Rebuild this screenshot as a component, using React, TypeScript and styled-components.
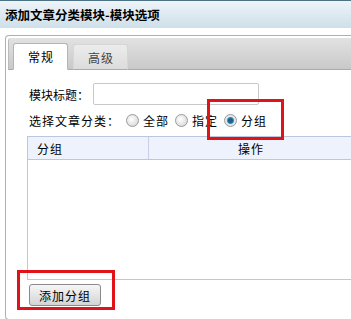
import React from "react";
import styled, { createGlobalStyle } from "styled-components";

const Global = createGlobalStyle`
  html, body { margin: 0; padding: 0; background: #fff; }
  body { font-family: "Noto Sans CJK SC", "Noto Sans", sans-serif; font-size: 12px; color: #000; overflow: hidden; }
`;

const Page = styled.div`
  position: relative;
  width: 351px;
  height: 319px;
  overflow: hidden;
`;

const TitleBar = styled.div`
  height: 27px;
  border-top: 1px solid #4d7486;
  background: linear-gradient(#eef4f8, #cde0ea);
  display: flex;
  align-items: center;
  padding-left: 5px;
  font-weight: bold;
  font-size: 12.5px;
`;

const Panel = styled.div`
  margin: 7px 0 0 5px;
  height: 283px;
  border: 1px solid #a3b3bd;
  border-right: none;
  border-radius: 4px 0 0 4px;
  display: flex;
  flex-direction: column;
  background: #fff;
`;

const TabBar = styled.div`
  height: 31px;
  margin: 2px 0 0 2px;
  border-radius: 3px 0 0 0;
  background: linear-gradient(#e2e2e2, #c9c9c9);
  border-bottom: 1px solid #aaa;
  border-left: 1px solid #bbb;
  display: flex;
  align-items: flex-end;
  gap: 5px;
  padding-left: 4px;
`;

const Tab = styled.div<{ $active?: boolean }>`
  box-sizing: border-box;
  width: 55px;
  height: ${(p) => (p.$active ? 27 : 26)}px;
  margin-bottom: -1px;
  border-radius: 3px 3px 0 0;
  display: flex;
  align-items: center;
  padding-left: 14px;
  font-size: 12px;
  letter-spacing: 1px;
  color: ${(p) => (p.$active ? "#000" : "#444")};
  background: ${(p) => (p.$active ? "#fff" : "linear-gradient(#ececec, #dcdcdc)")};
  border: 1px solid ${(p) => (p.$active ? "#b5b5b5" : "#d6d6d6")};
  border-bottom: ${(p) => (p.$active ? "1px solid #fff" : "1px solid #aaa")};
`;

const Content = styled.div`
  padding: 13px 0 0 21px;
  display: flex;
  flex-direction: column;
`;

const Row = styled.div<{ $gap?: number; $spacing?: number }>`
  display: flex;
  align-items: center;
  height: 22px;
  margin-left: 2px;
  margin-top: ${(p) => p.$gap ?? 0}px;
  letter-spacing: ${(p) => p.$spacing ?? 1}px;
`;

const Input = styled.div`
  width: 164px;
  height: 20px;
  border: 1px solid #c8c8c8;
  border-radius: 2px;
  margin-left: 4px;
`;

const Radio = styled.span<{ $on?: boolean }>`
  width: 11px;
  height: 11px;
  border-radius: 50%;
  border: 1px solid #9a9a9a;
  background: ${(p) =>
    p.$on
      ? "radial-gradient(circle, #1d5f86 0 2px, #3b8bb8 3px, #dfe8ee 4px)"
      : "radial-gradient(circle at 40% 40%, #fff, #d0d0d0)"};
  margin: 0 4px 0 6px;
  flex: none;
`;

const Table = styled.div`
  margin-top: 5px;
  height: 142px;
  border: 1px solid #bcc6de;
  border-right: none;
  display: flex;
  flex-direction: column;
`;

const THead = styled.div`
  height: 22px;
  background: #eef2fc;
  border-bottom: 1px solid #bcc6de;
  display: flex;
  align-items: stretch;
  letter-spacing: 1px;
`;

const Th = styled.div<{ $w?: number; $pad: number; $divider?: boolean }>`
  box-sizing: border-box;
  ${(p) => (p.$w ? `width: ${p.$w}px; flex: none;` : "flex: 1;")}
  padding-left: ${(p) => p.$pad}px;
  border-left: ${(p) => (p.$divider ? "1px solid #c8cfe2" : "none")};
  display: flex;
  align-items: center;
`;

const Button = styled.button`
  margin: 4px 0 0 2px;
  width: 72px;
  height: 22px;
  border: 1px solid #8a8a8a;
  border-radius: 3px;
  background: linear-gradient(#f6f6f6, #d4d4d4);
  font-family: inherit;
  font-size: 12px;
  letter-spacing: 1px;
  padding: 0;
  color: #000;
`;

const Mark = styled.div<{ $x: number; $y: number; $w: number; $h: number }>`
  position: absolute;
  left: ${(p) => p.$x}px;
  top: ${(p) => p.$y}px;
  width: ${(p) => p.$w}px;
  height: ${(p) => p.$h}px;
  border: 3px solid #e01418;
  box-sizing: border-box;
`;

export default function App() {
  return (
    <Page>
      <Global />
      <TitleBar>添加文章分类模块-模块选项</TitleBar>
      <Panel>
        <TabBar>
          <Tab $active>常规</Tab>
          <Tab>高级</Tab>
        </TabBar>
        <Content>
          <Row $spacing={0}>
            模块标题：<Input />
          </Row>
          <Row $gap={4}>
            选择文章分类：<Radio />全部<Radio />指定<Radio $on />分组
          </Row>
          <Table>
            <THead>
              <Th $w={120} $pad={9}>分组</Th>
              <Th $pad={89} $divider>操作</Th>
            </THead>
          </Table>
          <Button>添加分组</Button>
        </Content>
      </Panel>
      <Mark $x={207} $y={99} $w={77} $h={41} />
      <Mark $x={17} $y={270} $w={98} $h={40} />
    </Page>
  );
}
